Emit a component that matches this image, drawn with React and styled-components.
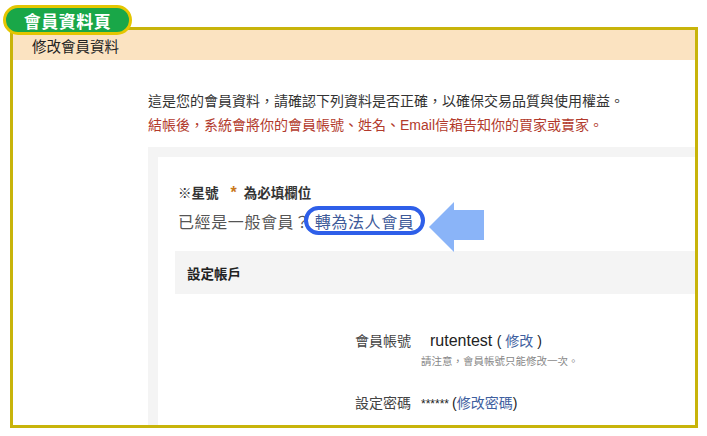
import React from "react";
import styled, { createGlobalStyle } from "styled-components";

const GlobalStyle = createGlobalStyle`
  html, body { margin: 0; padding: 0; background: #ffffff; }
  body { font-family: "Liberation Sans", "Noto Sans CJK TC", sans-serif; color: #333; }
`;

const Page = styled.div`
  position: relative;
  width: 707px;
  height: 436px;
  padding: 27px 0 0 10px;
  box-sizing: border-box;
  overflow: hidden;
`;

const Badge = styled.div`
  position: absolute;
  left: 3px;
  top: 5px;
  width: 129px;
  height: 30px;
  box-sizing: border-box;
  border: 3px solid #e4c600;
  border-radius: 15px;
  background: #19a748;
  color: #fff;
  font-weight: bold;
  font-size: 17px;
  display: flex;
  align-items: center;
  justify-content: center;
  letter-spacing: 0.5px;
  z-index: 2;
`;

const Frame = styled.div`
  width: 688px;
  height: 401px;
  box-sizing: border-box;
  border: 3px solid #c8b40a;
  overflow: hidden;
  display: flex;
  flex-direction: column;
`;

const HeaderBand = styled.div`
  height: 30px;
  flex-shrink: 0;
  background: #fbe3c1;
  display: flex;
  align-items: center;
  padding-left: 19px;
  font-size: 14.5px;
  color: #222;
`;

const Intro = styled.div`
  margin-top: 29px;
  padding-left: 135px;
  font-size: 14px;
  line-height: 24px;
`;

const IntroLine = styled.div`
  color: ${(p) => (p.$warn ? "#b23a2c" : "#333")};
  white-space: nowrap;
`;

const GrayPanel = styled.div`
  margin: 10px 0 0 135px;
  padding: 10px 0 0 10px;
  background: #f4f4f4;
  flex: 1;
  display: flex;
`;

const WhitePanel = styled.div`
  flex: 1;
  background: #fff;
  padding: 26px 0 0 20px;
  display: flex;
  flex-direction: column;
`;

const RequiredNote = styled.div`
  font-size: 13.5px;
  font-weight: bold;
  line-height: 20px;
  color: #333;
  white-space: nowrap;
`;

const Star = styled.span`
  color: #c9781c;
  font-size: 16px;
  margin: 0 7px 0 12px;
`;

const MemberLine = styled.div`
  margin-top: 7px;
  font-size: 16px;
  letter-spacing: 0.6px;
  line-height: 24px;
  color: #555;
  white-space: nowrap;
`;

const RingWrap = styled.span`
  position: relative;
  margin-left: 4px;
`;

const Ring = styled.span`
  position: absolute;
  left: -11px;
  right: -11px;
  top: -8px;
  bottom: -4px;
  border: 4px solid #2e5fe9;
  border-radius: 17px;
  pointer-events: none;
`;

const Link = styled.a`
  color: ${(p) => p.$tone || "#3f5f9f"};
  text-decoration: none;
  cursor: pointer;
`;

const ArrowIcon = styled.svg`
  position: absolute;
  left: 114px;
  top: -13px;
  width: 56px;
  height: 52px;
`;

const SectionBar = styled.div`
  margin: 16px 0 0 -3px;
  height: 43px;
  background: #f4f4f4;
  display: flex;
  align-items: center;
  padding-left: 12px;
  font-size: 13.5px;
  font-weight: bold;
  color: #222;
`;

const Fields = styled.div`
  padding-left: 177px;
  display: flex;
  flex-direction: column;
`;

const FieldRow = styled.div`
  margin-top: ${(p) => p.$gap}px;
  display: flex;
  align-items: baseline;
  line-height: 24px;
  white-space: nowrap;
`;

const FieldLabel = styled.span`
  width: 66px;
  flex-shrink: 0;
  font-size: 14px;
  color: #444;
`;

const FieldValue = styled.span`
  margin-left: ${(p) => p.$indent || 0}px;
  font-size: ${(p) => p.$size || 14}px;
  color: #222;
`;

const Hint = styled.div`
  padding-left: 66px;
  font-size: 10.5px;
  line-height: 16px;
  color: #888;
  white-space: nowrap;
`;

export default function App() {
  return (
    <>
      <GlobalStyle />
      <Page>
        <Badge>會員資料頁</Badge>
        <Frame>
          <HeaderBand>修改會員資料</HeaderBand>
          <Intro>
            <IntroLine>這是您的會員資料，請確認下列資料是否正確，以確保交易品質與使用權益。</IntroLine>
            <IntroLine $warn>結帳後，系統會將你的會員帳號、姓名、Email信箱告知你的買家或賣家。</IntroLine>
          </Intro>
          <GrayPanel>
            <WhitePanel>
              <RequiredNote>
                ※星號<Star>*</Star>為必填欄位
              </RequiredNote>
              <MemberLine>
                已經是一般會員？
                <RingWrap>
                  <Link $tone="#3d5a99">轉為法人會員</Link>
                  <Ring />
                  <ArrowIcon viewBox="0 0 56 52">
                    <polygon
                      points="0,26 25,1 25,9 55,9 55,39 25,39 25,51"
                      fill="#8ab4f8"
                    />
                  </ArrowIcon>
                </RingWrap>
              </MemberLine>
              <SectionBar>設定帳戶</SectionBar>
              <Fields>
                <FieldRow $gap={35}>
                  <FieldLabel>會員帳號</FieldLabel>
                  <FieldValue $indent={9} $size={16}>
                    rutentest <FieldValue $size={14}>( <Link>修改</Link> )</FieldValue>
                  </FieldValue>
                </FieldRow>
                <Hint>請注意，會員帳號只能修改一次。</Hint>
                <FieldRow $gap={22}>
                  <FieldLabel>設定密碼</FieldLabel>
                  <FieldValue $size={12}>******</FieldValue>
                  <FieldValue $indent={3}>
                    (<Link>修改密碼</Link>)
                  </FieldValue>
                </FieldRow>
              </Fields>
            </WhitePanel>
          </GrayPanel>
        </Frame>
      </Page>
    </>
  );
}
